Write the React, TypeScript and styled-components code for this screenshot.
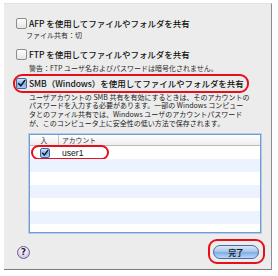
import React from "react";
import styled, { createGlobalStyle } from "styled-components";

const GlobalStyle = createGlobalStyle`
  * { box-sizing: border-box; }
  body {
    margin: 0;
    background: #ffffff;
    font-family: "Noto Sans CJK JP", "Noto Sans", sans-serif;
    color: #1b1b1b;
  }
`;

const Panel = styled.div`
  position: relative;
  display: flex;
  flex-direction: column;
  width: 268px;
  height: 267px;
  margin: 3px 0 0 4px;
  padding: 13px 0 0 12px;
  background: #ececec;
  border-top: 1px solid #e2e2e2;
  border-right: 1px solid #8e8e8e;
  border-bottom: 1px solid #7c7c7c;
`;

const OptionRow = styled.div<{ $top: number }>`
  position: relative;
  display: flex;
  align-items: center;
  gap: 2px;
  height: 12px;
  margin-top: ${(p) => p.$top}px;
`;

const Label = styled.span`
  font-size: 8.5px;
  font-weight: 500;
  line-height: 12px;
  white-space: nowrap;
  color: #111;
  letter-spacing: -0.05px;
`;

const Note = styled.div<{ $left: number; $top: number }>`
  margin: ${(p) => p.$top}px 0 0 ${(p) => p.$left}px;
  font-size: 7px;
  line-height: 9px;
  white-space: nowrap;
  color: #2a2a2a;
`;

const Description = styled.div`
  margin: 3.7px 0 0 13px;
  font-size: 7px;
  line-height: 8.7px;
  color: #222;
  span {
    display: block;
    white-space: nowrap;
  }
`;

const Box = styled.span<{ $size: number }>`
  display: inline-flex;
  width: ${(p) => p.$size}px;
  height: ${(p) => p.$size}px;
  flex: none;
  border-radius: 2px;
  border: 1px solid #8d8d8d;
  background: linear-gradient(#ffffff, #e4e4e4);
  svg {
    display: block;
  }
`;

const CheckedBox = styled(Box)`
  border-color: #41679e;
  background: linear-gradient(#d4e6fb, #7fb0ea 55%, #a9cdf7);
`;

const Highlight = styled.div<{ $l: number; $t: number; $w: number; $h: number }>`
  position: absolute;
  left: ${(p) => p.$l}px;
  top: ${(p) => p.$t}px;
  width: ${(p) => p.$w}px;
  height: ${(p) => p.$h}px;
  border: 2px solid #e5101c;
  border-radius: 9px;
  pointer-events: none;
`;

const Table = styled.div`
  display: flex;
  flex-direction: column;
  width: 232px;
  height: 99px;
  margin: 6.5px 0 0 13px;
  border: 1px solid #6f9bd9;
  box-shadow: 0 0 0 1px rgba(125, 165, 225, 0.45);
  background: #ffffff;
  overflow: hidden;
`;

const HeaderRow = styled.div`
  display: flex;
  height: 11px;
  flex: none;
  background: linear-gradient(#ffffff, #ededed);
  border-bottom: 1px solid #bcbcbc;
  font-size: 6.8px;
  line-height: 10px;
  color: #333;
`;

const HeadCell = styled.div<{ $w?: number }>`
  ${(p) => (p.$w ? `width: ${p.$w}px; text-align: center; border-right: 1px solid #c4c4c4;` : "flex: 1; padding-left: 3px;")}
`;

const Row = styled.div<{ $alt: boolean }>`
  position: relative;
  display: flex;
  align-items: center;
  height: 13px;
  flex: none;
  background: ${(p) => (p.$alt ? "#edf3fe" : "#ffffff")};
`;

const CheckCell = styled.div`
  width: 29px;
  display: flex;
  justify-content: center;
`;

const NameCell = styled.div`
  padding-left: 3px;
  font-family: "Liberation Sans", Arial, sans-serif;
  font-size: 8.6px;
  color: #111;
`;

const Footer = styled.div`
  display: flex;
  align-items: center;
  justify-content: space-between;
  height: 14px;
  margin-top: 12px;
  padding: 0 12px 0 1px;
`;

const HelpButton = styled.div`
  width: 13px;
  height: 13px;
  border-radius: 50%;
  border: 1px solid #6e5f93;
  background: radial-gradient(circle at 50% 30%, #ffffff, #ddd2f2 60%, #b9a7de);
  display: flex;
  align-items: center;
  justify-content: center;
  font-family: "DejaVu Sans", sans-serif;
  font-weight: bold;
  font-size: 8.5px;
  line-height: 1;
  color: #222;
`;

const DoneWrap = styled.div`
  position: relative;
`;

const DoneButton = styled.div`
  width: 46px;
  height: 14px;
  border-radius: 7px;
  border: 1px solid #4a6d9f;
  background: linear-gradient(#dae7f7 0%, #a9c7ec 45%, #80aee4 55%, #bcd8f8 100%);
  display: flex;
  align-items: center;
  justify-content: center;
  font-size: 7.5px;
  font-weight: bold;
  color: #1a1a1a;
`;

const Check = ({ size }: { size: number }) => (
  <CheckedBox $size={size}>
    <svg width={size - 2} height={size - 2} viewBox="0 0 10 10">
      <path d="M2 5.2 L4.2 7.6 L8.6 1.6" fill="none" stroke="#10131a" strokeWidth="1.7" strokeLinecap="round" strokeLinejoin="round" />
    </svg>
  </CheckedBox>
);

const rows = [0, 1, 2, 3, 4, 5, 6];

export default function App() {
  return (
    <>
      <GlobalStyle />
      <Panel>
        <OptionRow $top={0}>
          <Box $size={11} />
          <Label>AFP を使用してファイルやフォルダを共有</Label>
        </OptionRow>
        <Note $left={10} $top={1.5}>ファイル共有：切</Note>

        <OptionRow $top={8.5}>
          <Box $size={11} />
          <Label>FTP を使用してファイルやフォルダを共有</Label>
        </OptionRow>
        <Note $left={13} $top={3.5}>警告：FTP ユーザ名およびパスワードは暗号化されません。</Note>

        <OptionRow $top={4.5}>
          <Check size={11} />
          <Label>SMB（Windows）を使用してファイルやフォルダを共有</Label>
          <Highlight $l={-3} $t={-3} $w={236} $h={19} />
        </OptionRow>
        <Description>
          <span>ユーザアカウントの SMB 共有を有効にするときは、そのアカウントの</span>
          <span>パスワードを入力する必要があります。一部の Windows コンピュー</span>
          <span>タとのファイル共有では、Windows ユーザのアカウントパスワード</span>
          <span>が、このコンピュータ上に安全性の低い方法で保存されます。</span>
        </Description>

        <Table>
          <HeaderRow>
            <HeadCell $w={29}>入</HeadCell>
            <HeadCell>アカウント</HeadCell>
          </HeaderRow>
          {rows.map((i) => (
            <Row key={i} $alt={i % 2 === 1}>
              {i === 0 && (
                <>
                  <CheckCell>
                    <Check size={10} />
                  </CheckCell>
                  <NameCell>user1</NameCell>
                  <Highlight $l={1} $t={-1} $w={78} $h={15} />
                </>
              )}
            </Row>
          ))}
        </Table>

        <Footer>
          <HelpButton>?</HelpButton>
          <DoneWrap>
            <DoneButton>完了</DoneButton>
            <Highlight $l={-5} $t={-6} $w={57} $h={25} />
          </DoneWrap>
        </Footer>
      </Panel>
    </>
  );
}
